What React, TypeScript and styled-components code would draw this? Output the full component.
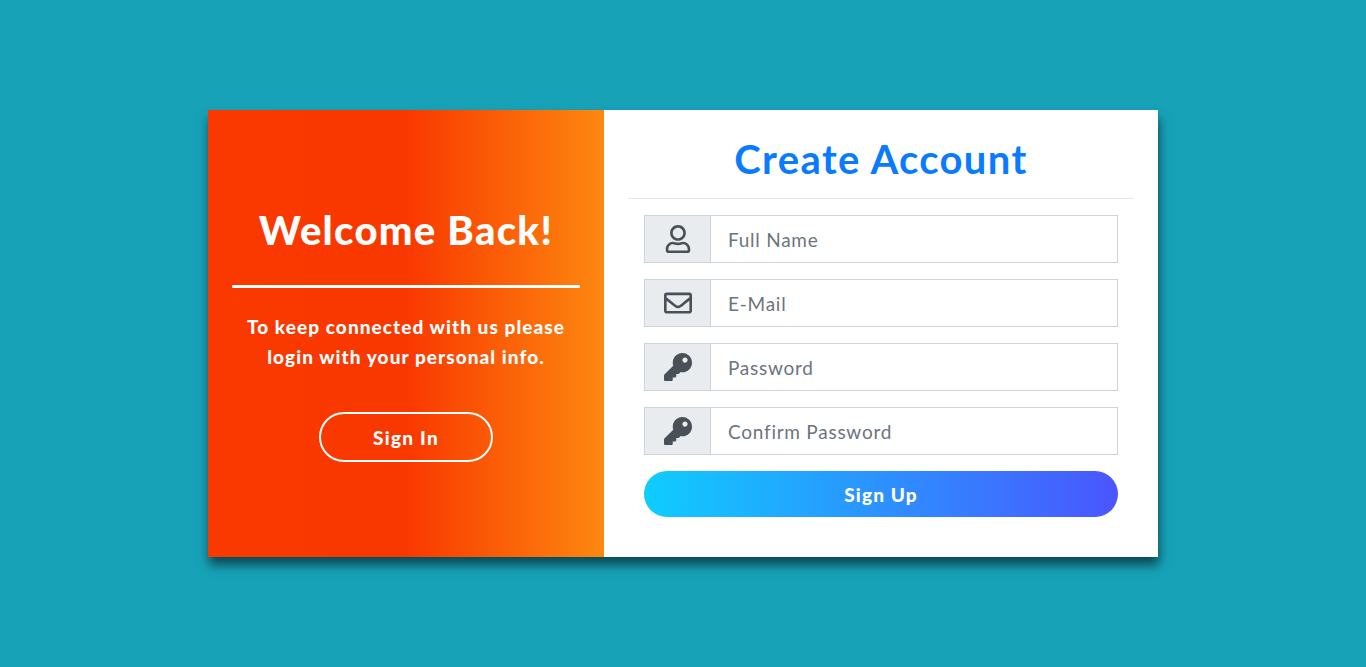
import React from "react";
import styled, { createGlobalStyle } from "styled-components";
import { FaRegUser, FaRegEnvelope, FaKey } from "react-icons/fa";

const Global = createGlobalStyle`
  html, body { margin: 0; padding: 0; height: 100%; }
  body { background: #17a2b8; font-family: "Lato", "Open Sans", sans-serif; }
  * { box-sizing: border-box; }
`;
const Page = styled.div`
  width: 1366px; height: 667px; padding-top: 110px; padding-left: 208px; overflow: hidden;
`;
const Card = styled.div`
  display: flex; width: 950px; height: 447px; background: #fff;
  box-shadow: 1px 8px 10px rgba(0,0,0,.55);
`;
const Left = styled.div`
  width: 396px; padding: 97px 24px 0; color: #fff; text-align: center;
  background: linear-gradient(to right, #fa3900 0%, #f93800 50%, #fd8810 100%);
  display: flex; flex-direction: column; align-items: center;
`;
const Welcome = styled.h1`
  margin: 0; font-size: 40px; line-height: 46px; font-weight: 900; letter-spacing: 1.3px; white-space: nowrap;
`;
const Rule = styled.div`
  width: 100%; height: 3px; background: #fff; margin: 32px 0 24px; border-radius: 1px;
`;
const Para = styled.p`
  margin: 0; font-size: 19px; line-height: 30px; font-weight: 900; white-space: nowrap; letter-spacing: 1.06px;
`;
const Outline = styled.button`
  margin-top: 40px; width: 174px; height: 50px; border-radius: 25px; border: 2px solid #fff;
  background: transparent; color: #fff; font: 900 19px "Lato", sans-serif; letter-spacing: 1.25px;
`;
const Right = styled.div`
  width: 554px; padding: 0 24px; display: flex; flex-direction: column; align-items: stretch;
`;
const Title = styled.h2`
  margin: 0; height: 89px; padding-top: 24px; text-align: center; color: #0a7bff;
  font-size: 40px; line-height: 50px; font-weight: 700; letter-spacing: 1.35px; border-bottom: 1px solid #e6e6e6;
`;
const Form = styled.div`
  padding: 16px 16px 0; display: flex; flex-direction: column; gap: 16px;
`;
const Group = styled.div`
  display: flex; height: 48px; border: 1px solid #ced4da;
`;
const Addon = styled.div`
  width: 66px; background: #e9ecef; border-right: 1px solid #ced4da; color: #495057; font-size: 28px;
  display: flex; align-items: center; justify-content: center; flex: none;
  svg { display: block; }
`;
const Field = styled.input`
  flex: 1; border: 0; padding: 0 16px 0 17px; min-width: 0; font: 400 19px "Lato", sans-serif; letter-spacing: .75px; color: #495057; background: #fff; outline: 0;
  &::placeholder { color: #6c757d; opacity: 1; }
`;
const Submit = styled.button`
  height: 46px; border: 0; border-radius: 23px; padding-top: 1px; color: #fff; font: 900 19px "Lato", sans-serif; letter-spacing: 1.15px;
  background: linear-gradient(to right, #0fcdff, #4a55ff);
`;

const fields = [
  { icon: <FaRegUser />, ph: "Full Name" },
  { icon: <FaRegEnvelope />, ph: "E-Mail" },
  { icon: <FaKey />, ph: "Password" },
  { icon: <FaKey />, ph: "Confirm Password" },
];

export default function App() {
  return (
    <Page>
      <Global />
      <Card>
        <Left>
          <Welcome>Welcome Back!</Welcome>
          <Rule />
          <Para>To keep connected with us please<br />login with your personal info.</Para>
          <Outline>Sign In</Outline>
        </Left>
        <Right>
          <Title>Create Account</Title>
          <Form>
            {fields.map((f) => (
              <Group key={f.ph}>
                <Addon>{f.icon}</Addon>
                <Field placeholder={f.ph} />
              </Group>
            ))}
            <Submit>Sign Up</Submit>
          </Form>
        </Right>
      </Card>
    </Page>
  );
}
